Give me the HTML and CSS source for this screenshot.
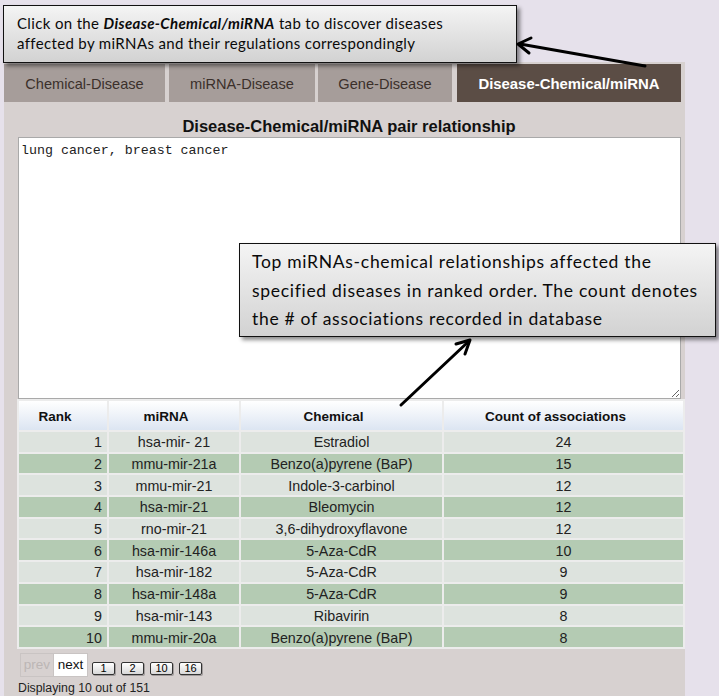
FILE: index.html
```html
<!DOCTYPE html>
<html>
<head>
<meta charset="utf-8">
<link rel="stylesheet" href="styles.css">
</head>
<body>
<div class="page">
  <div class="panel">
    <div class="tabs">
      <div class="tab t1">Chemical-Disease</div>
      <div class="tab t2">miRNA-Disease</div>
      <div class="tab t3">Gene-Disease</div>
      <div class="tab t4 active">Disease-Chemical/miRNA</div>
    </div>
    <div class="content">
      <h2 class="title">Disease-Chemical/miRNA pair relationship</h2>
      <textarea class="query">lung cancer, breast cancer</textarea>
      <table class="results">
        <thead>
          <tr><th class="c1">Rank</th><th class="c2">miRNA</th><th class="c3">Chemical</th><th class="c4">Count of associations</th></tr>
        </thead>
        <tbody>
          <tr class="odd"><td class="rank">1</td><td>hsa-mir- 21</td><td>Estradiol</td><td>24</td></tr>
          <tr class="even"><td class="rank">2</td><td>mmu-mir-21a</td><td>Benzo(a)pyrene (BaP)</td><td>15</td></tr>
          <tr class="odd"><td class="rank">3</td><td>mmu-mir-21</td><td>Indole-3-carbinol</td><td>12</td></tr>
          <tr class="even"><td class="rank">4</td><td>hsa-mir-21</td><td>Bleomycin</td><td>12</td></tr>
          <tr class="odd"><td class="rank">5</td><td>rno-mir-21</td><td>3,6-dihydroxyflavone</td><td>12</td></tr>
          <tr class="even"><td class="rank">6</td><td>hsa-mir-146a</td><td>5-Aza-CdR</td><td>10</td></tr>
          <tr class="odd"><td class="rank">7</td><td>hsa-mir-182</td><td>5-Aza-CdR</td><td>9</td></tr>
          <tr class="even"><td class="rank">8</td><td>hsa-mir-148a</td><td>5-Aza-CdR</td><td>9</td></tr>
          <tr class="odd"><td class="rank">9</td><td>hsa-mir-143</td><td>Ribavirin</td><td>8</td></tr>
          <tr class="even"><td class="rank">10</td><td>mmu-mir-20a</td><td>Benzo(a)pyrene (BaP)</td><td>8</td></tr>
        </tbody>
      </table>
      <div class="pager">
        <span class="pbtn prev">prev</span><span class="pbtn next">next</span>
        <span class="num">1</span><span class="num">2</span><span class="num">10</span><span class="num">16</span>
      </div>
      <div class="status">Displaying 10 out of 151</div>
      <div class="controls">
        <span class="ctl ctl-blue"></span><span class="ctl ctl-gray"></span>
      </div>
    </div>
  </div>

  <div class="callout callout1">Click on the <b><i>Disease-Chemical/miRNA</i></b> tab to discover diseases<br>affected by miRNAs and their regulations correspondingly</div>
  <div class="callout callout2">Top miRNAs-chemical relationships affected the<br>specified diseases in ranked order. The count denotes<br>the # of associations recorded in database</div>

  <svg class="arrows" width="719" height="696" viewBox="0 0 719 696">
    <g stroke="#000" stroke-width="3" fill="none" stroke-linecap="round" stroke-linejoin="round">
      <path d="M645 66 L520 44"/>
      <path d="M531 38 L518 44 L529 53"/>
      <path d="M401 405 L468 342"/>
      <path d="M456 344 L470 340 L465 354"/>
    </g>
  </svg>
</div>
</body>
</html>
```
FILE: styles.css
```css
html, body {
  margin: 0;
  padding: 0;
}
body {
  background: #e6e1eb;
  font-family: "Liberation Sans", Arial, sans-serif;
  width: 719px;
  height: 696px;
  overflow: hidden;
}
.page {
  position: relative;
  width: 719px;
  height: 696px;
}
.panel {
  position: absolute;
  left: 4px;
  top: 62px;
  width: 681px;
  height: 640px;
  background: #d7d1d0;
}
.tabs {
  display: flex;
  padding-top: 2px;
  height: 38px;
}
.tab {
  height: 38px;
  display: flex;
  align-items: center;
  justify-content: center;
  background: #a69d9a;
  color: #3b302b;
  font-size: 14.6px;
  padding-top: 2px;
  box-sizing: border-box;
}
.t1 { width: 161px; margin-right: 4px; }
.t2 { width: 146px; margin-right: 3px; }
.t3 { width: 134px; margin-right: 5px; }
.t4 { width: 224px; }
.tab.active {
  background: #5b4d45;
  color: #fff;
  font-weight: bold;
  font-size: 14.9px;
}
.content {
  padding-left: 13px;
}
.title {
  margin: 0;
  height: 35px;
  line-height: 26px;
  padding-top: 11px;
  box-sizing: border-box;
  text-align: center;
  font-size: 16.5px;
  font-weight: bold;
  color: #111;
  padding-right: 4px;
}
.query {
  display: block;
  box-sizing: border-box;
  width: 663px;
  height: 262px;
  margin: 0 0 0 1px;
  border: 1px solid #a9a9a9;
  background: #fff;
  padding: 5px 2px;
  font-family: "Liberation Mono", "Courier New", monospace;
  font-size: 13.3px;
  color: #222;
  resize: both;
}
.results {
  border-collapse: separate;
  border-spacing: 2px;
  background: #ececec;
  width: 668px;
  table-layout: fixed;
}
.results th {
  box-sizing: border-box;
  height: 29px;
  padding: 1px 16px 0 0;
  font-size: 13.5px;
  font-weight: bold;
  color: #111;
  background: linear-gradient(#ffffff, #dce5f2);
}
.c1 { width: 88px; }
.c2 { width: 130px; }
.c3 { width: 201px; }
.c4 { width: 239px; }
.results td {
  box-sizing: border-box;
  height: 19.7px;
  padding: 1px 0 0 0;
  font-size: 14.3px;
  color: #222;
  text-align: center;
  line-height: 18px;
}
.results td.rank {
  text-align: right;
  padding-right: 5px;
}
.odd td { background: #dde3de; }
.even td { background: #b4cbb3; }
.pager {
  display: flex;
  align-items: flex-end;
  margin-top: 4px;
  margin-left: 3px;
  height: 24px;
}
.pbtn {
  box-sizing: border-box;
  height: 24px;
  line-height: 22px;
  font-size: 13.5px;
  text-align: center;
  border: 1px solid #c9c4c3;
}
.prev {
  color: #bcb6b5;
  background: #d7d1d0;
  width: 34px;
}
.next {
  color: #111;
  background: #fff;
  border-left: none;
  width: 34px;
}
.num {
  box-sizing: border-box;
  margin: 0 0 2px 6px;
  width: 23px;
  height: 13px;
  line-height: 11px;
  font-size: 11px;
  text-align: center;
  border: 1px solid #333;
  border-radius: 2px;
  background: linear-gradient(#ffffff, #d8d8d8);
  color: #000;
  box-shadow: 1px 1px 0 rgba(0,0,0,0.25);
}
.next + .num { margin-left: 4px; }
.status {
  margin-top: 3px;
  font-size: 12.3px;
  color: #222;
  line-height: 17px;
  padding-left: 1px;
}
.controls {
  display: flex;
  gap: 4px;
  padding-left: 1px;
  margin-top: 0;
}
.ctl {
  height: 8px;
  box-sizing: border-box;
  background: #d7d1d0;
}
.ctl-blue { width: 94px; border-top: 2px solid #8fb0de; }
.ctl-gray { width: 84px; border-top: 2px solid #b9b4b3; }
.callout {
  position: absolute;
  box-sizing: border-box;
  border: 1px solid #111;
  background: linear-gradient(#f4f4f4, #d2d2d2);
  box-shadow: 3px 3px 4px rgba(0,0,0,0.45);
  color: #0a0a0a;
  font-family: Lato, "Open Sans", sans-serif;
}
.callout1 {
  left: 3px;
  top: 5px;
  width: 514px;
  height: 58px;
  padding: 7px 0 0 13px;
  font-size: 15px;
  letter-spacing: 0.35px;
  line-height: 20px;
}
.callout2 {
  left: 239px;
  top: 243px;
  width: 477px;
  height: 94px;
  padding: 4px 0 0 12px;
  font-size: 17.5px;
  letter-spacing: 0.7px;
  line-height: 28.5px;
}
.arrows {
  position: absolute;
  left: 0;
  top: 0;
  pointer-events: none;
}
```
